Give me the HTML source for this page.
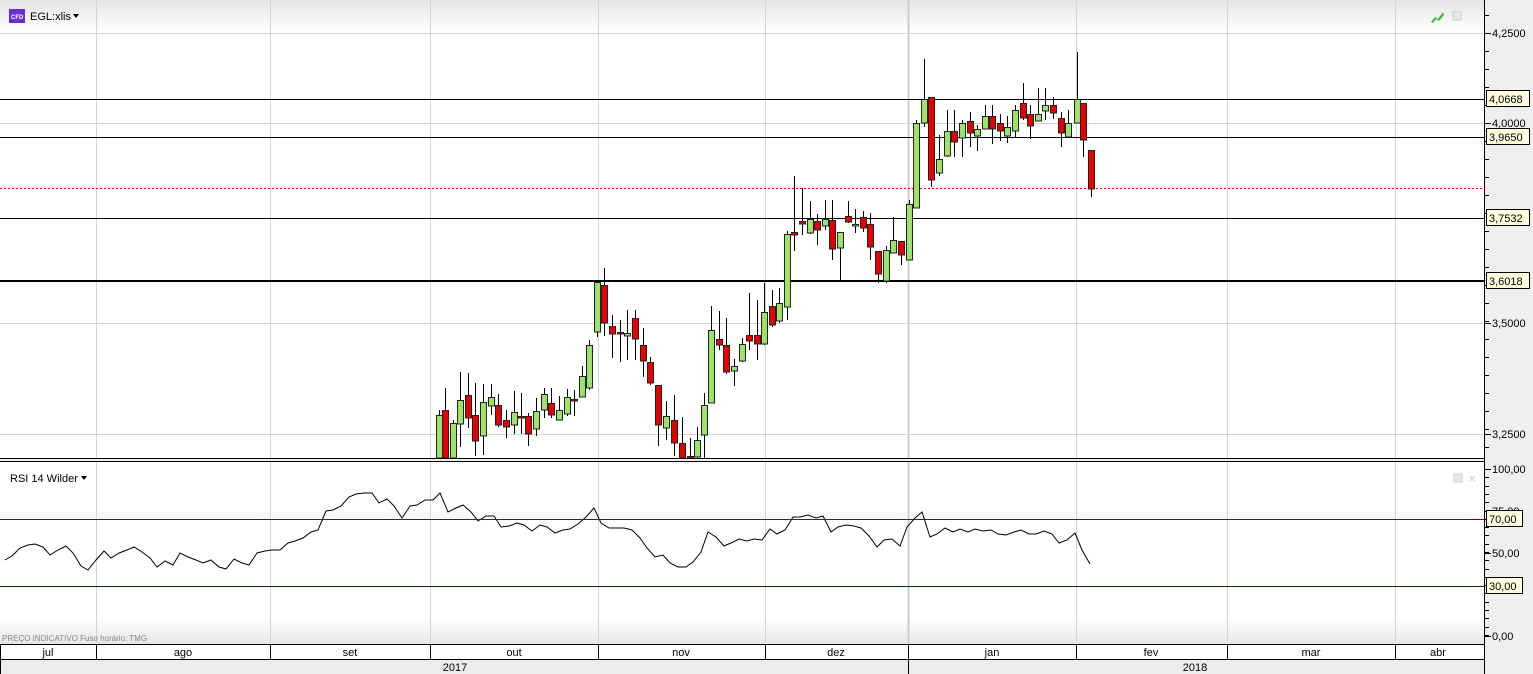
<!DOCTYPE html>
<html><head><meta charset="utf-8"><style>
body{margin:0;width:1533px;height:674px;overflow:hidden;background:#fff;font-family:"Liberation Sans","DejaVu Sans",sans-serif;}
svg{position:absolute;left:0;top:0}
</style></head><body>
<svg id="s" width="1533" height="674" xmlns="http://www.w3.org/2000/svg" font-family="Liberation Sans, DejaVu Sans, sans-serif">
<defs>
<linearGradient id="tg" x1="0" y1="0" x2="0" y2="1"><stop offset="0" stop-color="#e4e4e4"/><stop offset="1" stop-color="#ffffff"/></linearGradient>
<linearGradient id="bg2" x1="0" y1="0" x2="0" y2="1"><stop offset="0" stop-color="#ffffff"/><stop offset="1" stop-color="#e6e6e6"/></linearGradient>
</defs>
<rect x="0" y="0" width="1484" height="32" fill="url(#tg)"/>
<rect x="0" y="618" width="1484" height="26" fill="url(#bg2)"/>
<rect x="1484" y="0" width="49" height="674" fill="#efefef"/>
<line x1="1484.5" y1="0" x2="1484.5" y2="674" stroke="#000"/>
<g id="grid" stroke="#d4d4d4" stroke-width="1"></g>
<g id="lines"></g>
<g id="candles"></g>
<g id="rsi"></g>
<line x1="0" y1="458.5" x2="1484" y2="458.5" stroke="#000"/>
<line x1="0" y1="461.5" x2="1484" y2="461.5" stroke="#000"/>
<rect x="0" y="459" width="1484" height="2" fill="#eee"/>
<rect x="0" y="644" width="1484" height="16" fill="#fff"/>
<rect x="0" y="660" width="1484" height="14" fill="#ececec"/>
<line x1="0" y1="644.5" x2="1484" y2="644.5" stroke="#000"/>
<line x1="0" y1="659.5" x2="1484" y2="659.5" stroke="#000"/>
<g id="months" font-size="11" fill="#000" text-anchor="middle"></g>
<text x="455" y="671" font-size="11" text-anchor="middle">2017</text>
<text x="1195" y="671" font-size="11" text-anchor="middle">2018</text>
<text x="2" y="641" font-size="8" fill="#888">PREÇO INDICATIVO   Fuso horário: TMG</text>
<rect x="9" y="9" width="16" height="14" fill="#6a2fd0"/>
<text x="11" y="19" font-size="6" fill="#fff" font-weight="bold">CFD</text>
<text x="30" y="20" font-size="11">EGL:xlis</text>
<path d="M73 14 l6 0 l-3 4z" fill="#000"/>
<text x="10" y="482" font-size="11">RSI 14 Wilder</text>
<path d="M81 476 l6 0 l-3 4z" fill="#000"/>
<path d="M1431 22 l4 -5 l3 2 l5 -7 l1 3 l-5 6 l-3 -2 l-3 4z" fill="#3db83d"/>
<rect x="1453" y="12" width="8" height="8" fill="#e8e8e8" stroke="#ccc"/>
<rect x="1454" y="474" width="8" height="8" fill="#e8e8e8" stroke="#ccc"/>
<text x="1468" y="482" font-size="10" fill="#ccc">✕</text>
<g id="ax" font-size="11" fill="#000"></g>
</svg>
<script>
var NS="http://www.w3.org/2000/svg";
function el(p,t,a,txt){var e=document.createElementNS(NS,t);for(var k in a)e.setAttribute(k,a[k]);if(txt!=null)e.textContent=txt;document.getElementById(p).appendChild(e);return e;}
[96,270,430,598,765,1076,1227,1395].forEach(function(x){el('grid','line',{x1:x+.5,y1:0,x2:x+.5,y2:644});});
el('grid','line',{x1:908.5,y1:0,x2:908.5,y2:644,stroke:'#ccc','stroke-width':2});
[33,123,323,434].forEach(function(y){el('grid','line',{x1:0,y1:y+.5,x2:1484,y2:y+.5});});
[[99,1],[137,1],[218,1]].forEach(function(a){el('lines','line',{x1:0,y1:a[0]+.5,x2:1484,y2:a[0]+.5,stroke:'#000'});});
el('lines','line',{x1:0,y1:281,x2:1484,y2:281,stroke:'#000','stroke-width':2});
el('lines','line',{x1:0,y1:188.5,x2:1484,y2:188.5,stroke:'#e00','stroke-dasharray':'2,2'});
el('lines','line',{x1:0,y1:519.5,x2:1484,y2:519.5,stroke:'#800'});
el('lines','line',{x1:0,y1:586.5,x2:1484,y2:586.5,stroke:'#040'});
var C=[[439,410,460,415,460,1],[445,388,460,410,460,0],[453,420,460,423,460,1],[460,372,447,400,424,1],[468,373,428,395,418,0],[475,383,456,415,441,0],[483,384,455,402,436,1],[491,384,415,397,406,1],[498,394,427,405,425,0],[506,410,438,420,427,0],[514,391,434,412,425,1],[521,393,434,416,418,0],[528,413,446,416,434,0],[536,398,436,411,429,1],[544,388,418,394,410,1],[551,388,418,403,415,0],[559,396,420,410,420,1],[567,389,416,397,414,1],[574,390,416,399,401,0],[582,366,397,376,397,1],[589,340,390,345,388,1],[597,282,337,282,332,1],[604,268,336,285,323,0],[612,315,358,326,334,0],[620,320,362,332,334,0],[627,310,360,333,336,1],[635,310,360,318,339,0],[643,328,377,345,361,0],[650,357,385,362,383,0],[658,385,446,385,425,0],[666,401,440,416,428,1],[674,395,456,420,443,0],[682,417,460,443,460,0],[690,438,460,456,460,0],[697,427,460,440,457,1],[704,393,460,405,435,1],[711,306,403,330,403,1],[719,311,350,339,345,0],[726,318,374,345,372,0],[734,359,386,366,371,1],[742,338,362,344,361,1],[749,293,350,335,341,0],[757,300,360,335,344,0],[764,283,345,312,344,1],[772,290,327,306,325,0],[779,288,323,303,321,1],[787,231,320,234,307,1],[794,176,251,232,235,0],[802,188,235,221,224,0],[810,201,234,219,233,1],[817,214,245,221,230,0],[825,200,230,219,226,1],[832,200,260,220,249,0],[840,232,282,232,248,1],[848,201,223,216,222,0],[855,209,233,224,226,1],[863,211,232,217,228,0],[870,213,260,224,247,0],[878,251,283,251,274,0],[886,246,283,250,281,1],[893,217,253,240,253,1],[901,241,265,241,255,0],[909,200,260,204,260,1],[916,120,208,123,208,1],[924,59,127,99,123,1],[931,97,187,97,180,0],[939,135,176,159,173,1],[947,110,157,131,156,1],[954,110,157,131,142,0],[962,120,157,123,138,1],[970,112,147,121,133,0],[977,125,151,129,136,1],[985,105,129,116,129,1],[992,105,144,116,129,0],[1000,114,141,123,131,0],[1007,116,143,127,136,1],[1015,105,137,110,131,1],[1023,83,120,103,118,0],[1030,105,139,114,126,0],[1038,88,121,114,121,1],[1045,88,120,105,111,1],[1053,97,119,105,113,0],[1061,112,147,118,133,0],[1068,110,137,123,137,1],[1077,52,123,99,123,1],[1083,103,157,103,140,0],[1091,150,197,150,189,0]];
C.forEach(function(c){var x=c[0];
el('candles','line',{x1:x+.5,y1:c[1],x2:x+.5,y2:Math.min(c[2],458),stroke:'#000'});
var h=Math.max(c[4]-c[3],1);var bot=Math.min(c[3]+h,458);
el('candles','rect',{x:x-2.5,y:c[3]+.5,width:6,height:Math.max(bot-c[3]-.5,1),fill:c[5]?'#9be36a':'#e60000',stroke:'#222','stroke-width':1});});
var R=[[5,560],[12,556],[20,548],[28,545],[35,544],[43,547],[50,555],[58,550],[66,546],[73,553],[81,566],[88,570],[96,560],[104,551],[111,558],[119,553],[127,550],[134,547],[142,552],[150,558],[157,567],[165,561],[173,565],[180,553],[188,557],[196,560],[203,563],[211,560],[219,567],[226,569],[234,559],[242,563],[249,565],[257,553],[265,551],[272,550],[280,550],[288,543],[295,541],[303,538],[311,532],[318,530],[326,511],[333,510],[341,506],[349,497],[356,494],[364,493],[372,493],[379,503],[387,499],[394,506],[402,518],[410,506],[417,505],[425,500],[433,500],[440,493],[448,512],[456,508],[463,505],[471,512],[478,521],[486,516],[494,516],[501,527],[509,526],[517,523],[524,525],[532,531],[540,525],[547,527],[555,533],[563,530],[570,529],[578,524],[586,517],[594,508],[601,523],[609,528],[617,528],[624,528],[632,530],[640,538],[647,548],[655,557],[663,555],[670,563],[678,567],[686,567],[693,562],[701,552],[708,532],[716,537],[724,546],[731,543],[739,539],[747,541],[754,539],[762,540],[770,529],[777,534],[785,530],[793,517],[800,517],[808,515],[816,518],[823,516],[831,532],[838,527],[846,525],[854,526],[861,528],[869,536],[877,547],[884,540],[892,539],[900,546],[907,527],[915,518],[922,512],[930,537],[937,534],[945,528],[953,532],[960,529],[968,532],[975,529],[983,531],[991,530],[998,534],[1006,535],[1014,532],[1021,530],[1029,534],[1036,534],[1044,531],[1052,534],[1059,543],[1067,540],[1075,533],[1082,550],[1090,564]];
el('rsi','polyline',{points:R.map(function(p){return p.join(',')}).join(' '),fill:'none',stroke:'#000','stroke-width':1});
[['jul',48],['ago',183],['set',350],['out',514],['nov',681],['dez',836],['jan',992],['fev',1151],['mar',1311],['abr',1438]].forEach(function(m){el('months','text',{x:m[1],y:656},m[0]);});
[[0,1],[96,0],[270,0],[430,0],[598,0],[765,0],[908,1],[1076,0],[1227,0],[1395,0]].forEach(function(v){el('months','line',{x1:v[0]+.5,y1:644,x2:v[0]+.5,y2:v[1]?674:660,stroke:'#000'});});
for(var y=15;y<458;y+=18){el('ax','line',{x1:1484,y1:y+.5,x2:1489,y2:y+.5,stroke:'#000'});}
for(var y=469;y<640;y+=8.3){el('ax','line',{x1:1484,y1:Math.round(y)+.5,x2:1489,y2:Math.round(y)+.5,stroke:'#000'});}
[['4,2500',33],['4,0000',123],['3,5000',323],['3,2500',434],['100,00',469],['75,00',511],['50,00',553],['0,00',636]].forEach(function(a){el('ax','line',{x1:1484,y1:a[1]+.5,x2:1491,y2:a[1]+.5,stroke:'#000'});el('ax','text',{x:1492,y:a[1]+4},a[0]);});
[['4,0668',99],['3,9650',137],['3,7532',218],['3,6018',281],['70,00',519],['30,00',586]].forEach(function(a){el('ax','rect',{x:1486.5,y:a[1]-8.5,width:a[0].length>5?43:36,height:16,fill:'#ffffe0',stroke:'#000'});el('ax','text',{x:1489,y:a[1]+4},a[0]);});
</script>
</body></html>
